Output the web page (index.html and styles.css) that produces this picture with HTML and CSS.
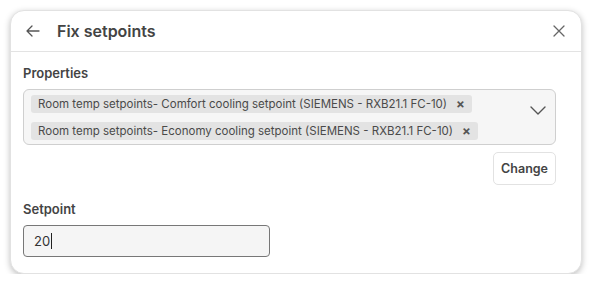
FILE: index.html
```html
<!DOCTYPE html>
<html lang="en">
<head>
    <meta charset="UTF-8">
    <meta name="viewport" content="width=device-width, initial-scale=1.0">
    <title>Fix setpoints</title>
    <link rel="stylesheet" href="styles.css">
</head>
<body>
    <div class="dialog">
        <header class="dialog-header">
            <button class="icon-btn back" aria-label="Back">
                <svg width="16" height="16" viewBox="0 0 16 16" fill="none" stroke="#555" stroke-width="1.3" stroke-linecap="round" stroke-linejoin="round">
                    <path d="M14 8H2M7 3L2 8l5 5"/>
                </svg>
            </button>
            <h1>Fix setpoints</h1>
            <button class="icon-btn close" aria-label="Close">
                <svg width="12" height="12" viewBox="0 0 12 12" fill="none" stroke="#666" stroke-width="1.3" stroke-linecap="round">
                    <path d="M1 1l10 10M11 1L1 11"/>
                </svg>
            </button>
        </header>
        <div class="dialog-body">
            <label class="field-label">Properties</label>
            <div class="multi-select">
                <div class="chips">
                    <span class="chip">Room temp setpoints- Comfort cooling setpoint (SIEMENS - RXB21.1 FC-10) <span class="chip-x">&times;</span></span>
                    <span class="chip">Room temp setpoints- Economy cooling setpoint (SIEMENS - RXB21.1 FC-10) <span class="chip-x">&times;</span></span>
                </div>
                <svg class="chevron" width="16" height="9" viewBox="0 0 16 9" fill="none" stroke="#555" stroke-width="1.4" stroke-linecap="round" stroke-linejoin="round">
                    <path d="M1 1l7 7 7-7"/>
                </svg>
            </div>
            <div class="actions">
                <button class="btn">Change</button>
            </div>
            <label class="field-label setpoint-label">Setpoint</label>
            <div class="text-input">20<span class="caret"></span></div>
        </div>
    </div>
</body>
</html>
```

FILE: styles.css
```css
* {
    margin: 0;
    padding: 0;
    box-sizing: border-box;
    font-family: Inter, "Noto Sans", sans-serif;
}

body {
    background-color: #fff;
    padding: 10px 12px 0 10px;
}

.dialog {
    width: 572px;
    height: 264px;
    background-color: #fff;
    border: 1px solid #e2e2e2;
    border-radius: 14px;
    box-shadow: 0 2px 6px rgba(0, 0, 0, 0.25);
}

.dialog-header {
    height: 41px;
    display: flex;
    align-items: center;
    padding: 0 16px 0 14px;
    border-bottom: 1px solid #e3e3e3;
}

.icon-btn {
    background: none;
    border: none;
    display: flex;
    align-items: center;
}

.back {
    margin-right: 16px;
}

.dialog-header h1 {
    font-size: 16px;
    font-weight: 600;
    color: #444;
    flex: 1;
}

.dialog-body {
    padding: 13px 25px 0 12px;
}

.field-label {
    display: block;
    font-size: 13px;
    font-weight: 600;
    color: #444;
    margin-bottom: 8px;
}

.multi-select {
    display: flex;
    align-items: center;
    height: 56px;
    background-color: #f6f6f6;
    border: 1px solid #cfcfcf;
    border-radius: 6px;
    padding: 0 9px 0 7px;
}

.chips {
    flex: 1;
    display: flex;
    flex-direction: column;
    align-items: flex-start;
    gap: 9px;
}

.chip {
    display: inline-flex;
    align-items: center;
    height: 18px;
    padding: 0 7px 0 7px;
    background-color: #e3e3e3;
    border-radius: 3px;
    font-size: 11.5px;
    color: #4a4a4a;
    white-space: nowrap;
}

.chip-x {
    font-size: 13px;
    font-weight: 700;
    color: #555;
    margin-left: 9px;
}

.chevron {
    margin-top: -14px;
}

.actions {
    display: flex;
    justify-content: flex-end;
    margin-top: 7px;
}

.btn {
    height: 33px;
    padding: 0 7px;
    background-color: #fff;
    border: 1px solid #e2e2e2;
    border-radius: 5px;
    font-size: 12.5px;
    font-weight: 600;
    color: #444;
}

.setpoint-label {
    margin-top: 16px;
}

.text-input {
    width: 247px;
    height: 32px;
    display: flex;
    align-items: center;
    padding-left: 10px;
    background-color: #f5f5f5;
    border: 1px solid #777;
    border-radius: 4px;
    font-size: 13px;
    color: #333;
}

.caret {
    display: inline-block;
    width: 1px;
    height: 16px;
    background-color: #222;
    margin-left: 1px;
}
```
